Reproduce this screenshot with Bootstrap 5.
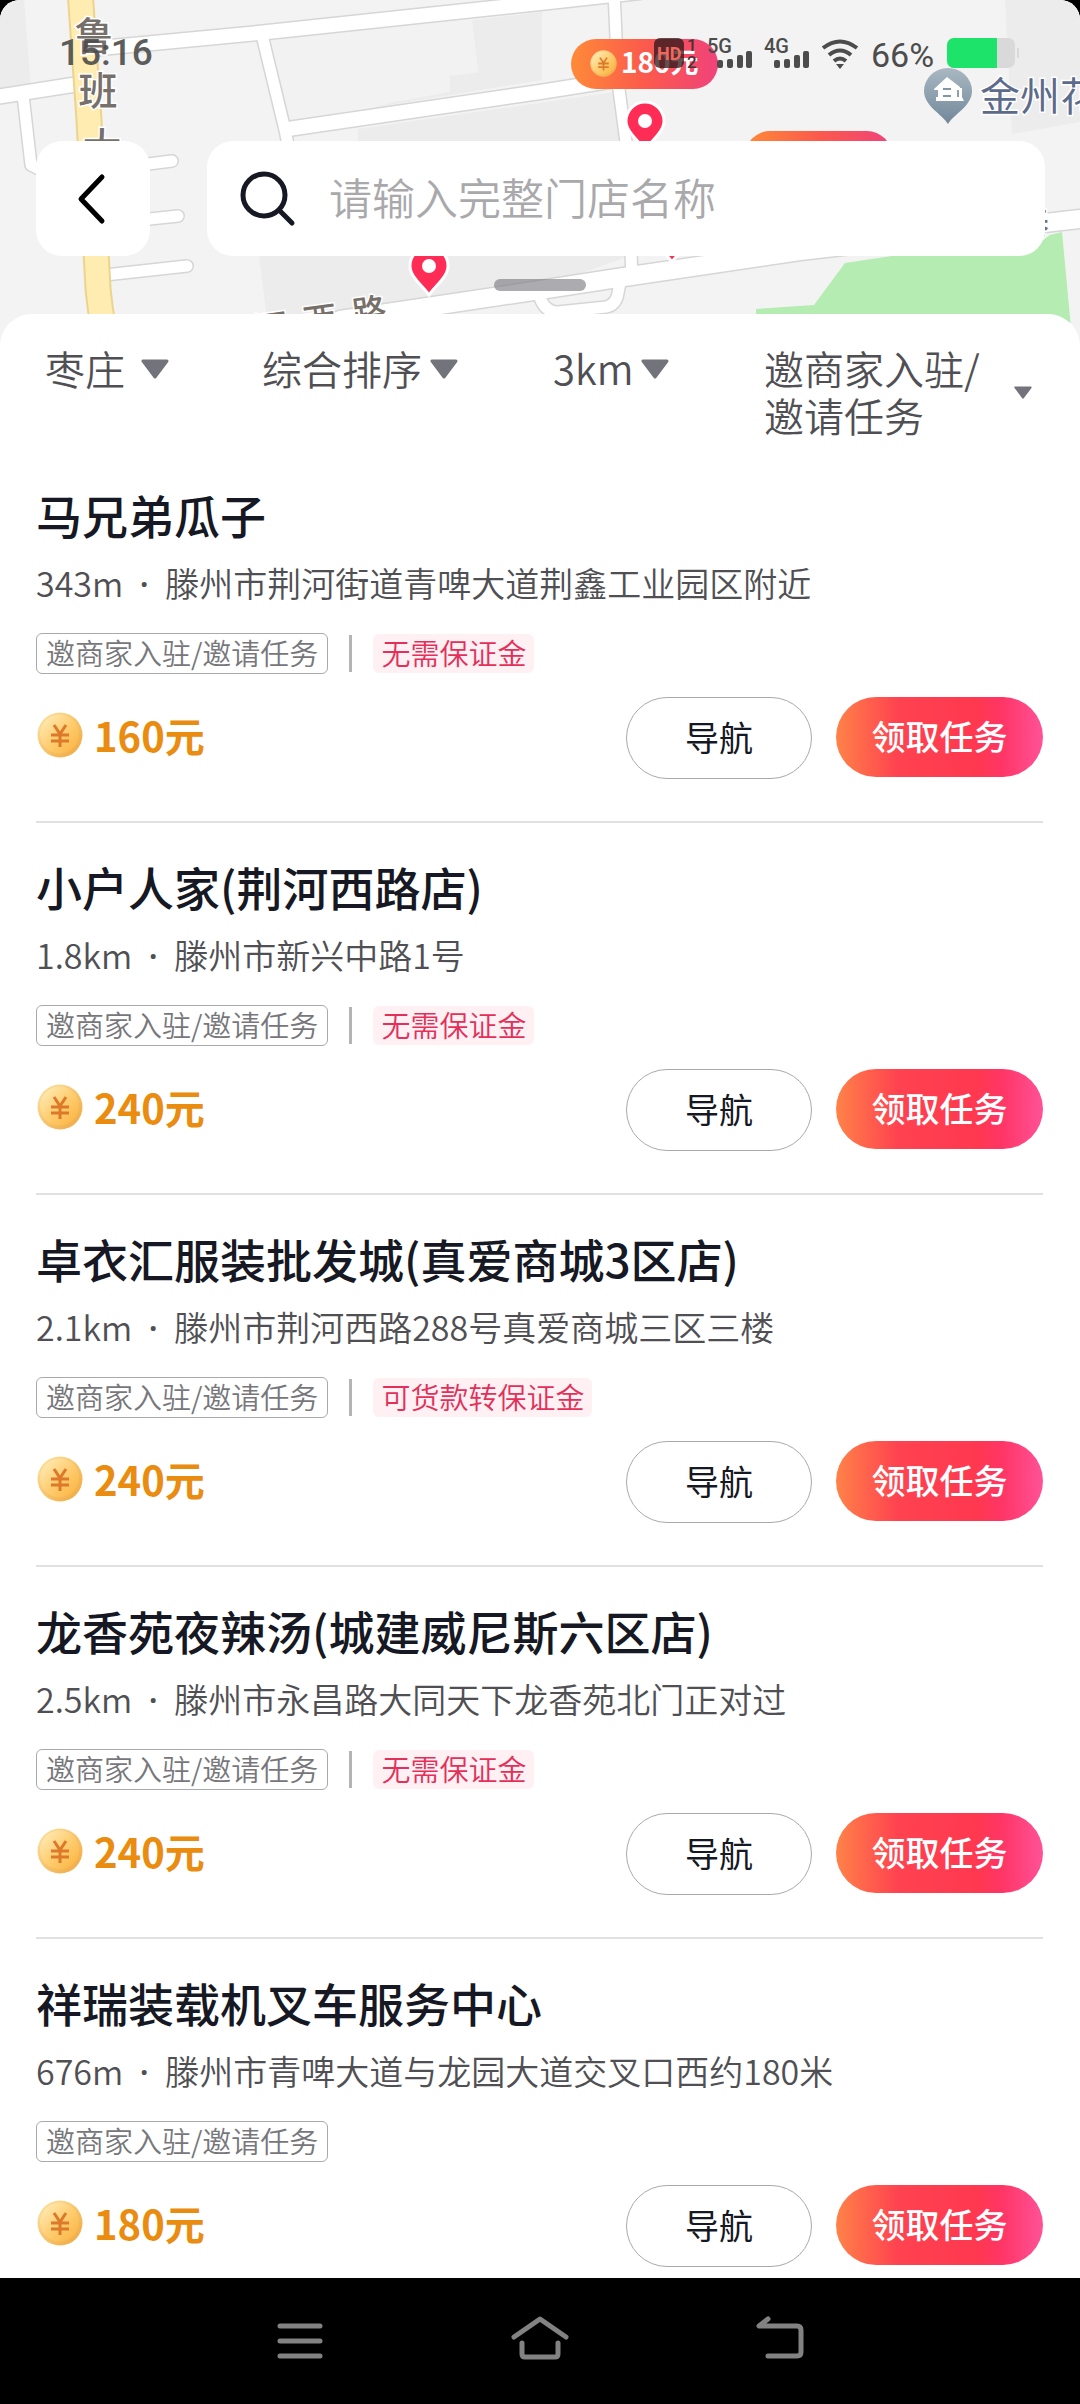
<!DOCTYPE html>
<html lang="zh-CN">
<head>
<meta charset="utf-8">
<meta name="viewport" content="width=device-width, initial-scale=1">
<title>附近任务</title>
<link rel="stylesheet" href="https://cdn.jsdelivr.net/npm/bootstrap@5.3.0/dist/css/bootstrap.min.css">
<style>
  body { background: #000; color: #161823; font-family: "Noto Sans CJK SC", sans-serif; }
  button { font-family: inherit; }
  .map-head { background: #f3f3f3; border-radius: 20px 20px 0 0; }
  .map-art { height: 360px; border-radius: 20px 20px 0 0; }
  .status-line { height: 106px; padding: 0 61px 0 59px; color: #4c4c4c; }
  .clock { font: 500 37px/40px Roboto, sans-serif; opacity: .9; }
  .tools { gap: 57px; padding: 35px 35px 0 36px; }
  .back-btn { width: 114px; height: 115px; border-radius: 26px; }
  .search-box { height: 115px; border-radius: 26px; padding: 0 33px; gap: 33px; }
  .search-box input { font-size: 43px; font-weight: 350; line-height: 60px; height: 64px; padding: 0 0 6px; color: #161823; outline: 0; }
  .search-box input::placeholder { color: #a9a9ac; opacity: 1; }
  .grip { width: 92px; height: 12px; border-radius: 6px; background: #808085; opacity: .65; margin: 23px auto; }
  .sheet { border-radius: 32px 32px 0 0; }
  .filters { display: grid; grid-template-columns: 217fr 291fr 211fr 316fr; height: 137px; padding: 31px 0 0 45px; }
  .filters button { font-size: 40px; line-height: 47px; font-weight: 350; color: #505054; }
  .task { padding: 33px 0 42px; margin: 0 37px 0 36px; border-bottom: 2px solid #e1e1e3; }
  .task:last-child { padding-bottom: 11px; border-bottom: 0; }
  .task h2 { font-size: 46px; line-height: 60px; font-weight: 500; margin: 0 0 14px; }
  .place { font-size: 34px; line-height: 50px; font-weight: 350; color: #505054; margin: 0 0 25px; }
  .place i { font-family: "Open Sans", sans-serif; font-style: normal; font-weight: 600; line-height: 1; display: inline-block; width: 42px; text-align: center; }
  .tags { height: 41px; margin-bottom: 23px; font-size: 29px; line-height: 37px; font-weight: 350; }
  .tag-kind { border: 1px solid #a9a9ac; border-radius: 6px; padding: 0 9px 2px; color: #77777b; }
  .tag-bar { width: 3px; height: 37px; background: #b4b4b6; margin: 0 21px; }
  .tag-fee { border-radius: 6px; padding: 0 8px 2px; background: #fff0f4; color: #e3305a; }
  .price { font-size: 40px; line-height: 60px; font-weight: 700; color: #ea8c10; gap: 10px; }
  .pill { font-size: 34px; line-height: 40px; font-weight: 500; border-radius: 41px; padding: 0 0 3px; }
  .pill-nav { width: 186px; height: 82px; border: 1px solid #a9a9ac; background: #fff; color: #161823; font-weight: 400; }
  .pill-take { width: 207px; height: 80px; border: 0; color: #fff; background: linear-gradient(90deg, #ff8248 0%, #ff4250 30%, #ff3850 68%, #ff3565 80%, #ff5298 100%); }
  .sys-nav { height: 126px; gap: 180px; }
  .sys-nav button { width: 60px; height: 60px; }
</style>
<script src="https://cdn.jsdelivr.net/npm/bootstrap@5.3.0/dist/js/bootstrap.bundle.min.js"></script>
</head>
<body class="min-vh-100 d-flex flex-column">

<svg width="0" height="0" class="position-absolute" aria-hidden="true">
  <defs>
    <linearGradient id="gold" x1="0" y1="0" x2="1" y2="1"><stop offset="0" stop-color="#fff0c0"/><stop offset=".5" stop-color="#ffce73"/><stop offset="1" stop-color="#f9b23c"/></linearGradient>
    <linearGradient id="rim" x1="0" y1="0" x2="1" y2="1"><stop offset="0" stop-color="#ffe3a0"/><stop offset="1" stop-color="#efa63c"/></linearGradient>
    <linearGradient id="hot" x1="0" x2="1"><stop offset="0" stop-color="#ff8a38"/><stop offset=".5" stop-color="#fb5a4c"/><stop offset="1" stop-color="#f0427a"/></linearGradient>
    <linearGradient id="slate" x1="0" y1="0" x2="0" y2="1"><stop offset="0" stop-color="#a9b8c2"/><stop offset="1" stop-color="#71889a"/></linearGradient>
  </defs>
  <symbol id="coin" viewBox="0 0 46 46">
    <circle cx="23" cy="23" r="22.500" fill="url(#rim)"/><circle cx="22.500" cy="22" r="19.500" fill="url(#gold)"/>
    <path d="M17 13l6 9 6-9M14 23h18M14 29h18M23 22v13" fill="none" stroke="#dc7a2a" stroke-width="3"/>
  </symbol>
  <symbol id="tri" viewBox="0 0 28 20"><path d="M2 2h24L14 18z" fill="#73737c" stroke="#73737c" stroke-width="3" stroke-linejoin="round"/></symbol>
  <symbol id="pin" viewBox="0 0 42 52">
    <path d="M21 49C15 40 2 31 2 20a19 19 0 0 1 38 0c0 11-13 20-19 29z" fill="#ff2c55" stroke="#fff" stroke-width="3"/><circle cx="21" cy="20" r="7" fill="#fff"/>
  </symbol>
</svg>

<header class="map-head position-relative">
  <svg class="map-art position-absolute top-0 start-0 w-100" viewBox="0 0 1080 360" preserveAspectRatio="xMidYMin slice" aria-label="地图">
    <rect width="1080" height="360" fill="#f3f3f3"/>
    <g fill="#ececec">
      <path d="M0 0h24l7 88-31 8zM1005 0h75v122l-68 12zM259 256h370l-88 32-274 32zM358 141v-12l257-37 8 50zM472 20l70-8v68l-170 28 78-22-2-10 30-4z"/>
    </g>
    <path d="M272 38l200-18 6 52-28 4v16l-78 14-84 16z" fill="#f2f2f2"/>
    <g fill="none" stroke-linecap="round" stroke-linejoin="round">
      <g stroke="#d6d6d6">
        <path stroke-width="17" d="M90 49L258 33 540 3 640-8M-10 98L85 83M288 129L540 92 622 79"/>
        <path stroke-width="14" d="M23 95l8 70 10 5M262 35l23 95 6 30M614-8l4 90 8 60 6 134M140 165l32-4M140 220l38-4M105 275l82-9M538 290q4 22 20 22l48-5q10-2 12-14l2-10"/>
        <path stroke-width="21" d="M340 320l200-30 84-13 176-26 280-32"/>
      </g>
      <g stroke="#fff">
        <path stroke-width="14" d="M90 49L258 33 540 3 640-8M-10 98L85 83M288 129L540 92 622 79"/>
        <path stroke-width="11" d="M23 95l8 70 10 5M262 35l23 95 6 30M614-8l4 90 8 60 6 134M140 165l32-4M140 220l38-4M105 275l82-9M538 290q4 22 20 22l48-5q10-2 12-14l2-10"/>
        <path stroke-width="18" d="M340 320l200-30 84-13 176-26 280-32"/>
      </g>
      <path stroke="#ecd48e" stroke-width="27" d="M80-10l9 130 8 150q1 40 12 80"/>
      <path stroke="#ffecb0" stroke-width="23" d="M80-10l9 130 8 150q1 40 12 80"/>
    </g>
    <path d="M756 309l58-4 31-42 60-9 135-12 10-7 12-3 12 128H756z" fill="#b4ecb1"/>
    <g font-family="Noto Sans CJK SC, sans-serif" font-size="39" font-weight="500" fill="#77706a" stroke="#fff" stroke-width="3" paint-order="stroke" text-anchor="middle">
      <text x="94" y="50">鲁</text><text x="98" y="105">班</text><text x="102" y="161">大</text>
      <g font-size="34"><text transform="translate(272 340) rotate(-8)">河</text><text transform="translate(322 332) rotate(-8)">西</text><text transform="translate(371 324) rotate(-8)">路</text><text x="1032" y="236">泰</text></g>
    </g>
    <use href="#pin" x="624" y="101" width="42" height="52"/>
    <use href="#pin" x="408" y="246" width="42" height="52"/>
    <use href="#pin" x="651" y="213" width="42" height="52"/>
    <rect x="745" y="131" width="147" height="50" rx="25" fill="url(#hot)"/>
    <rect x="571" y="39" width="147" height="50" rx="25" fill="url(#hot)"/>
    <use href="#coin" x="590" y="50" width="27" height="27"/>
    <text x="621" y="73" font-family="Noto Sans CJK SC, sans-serif" font-size="28" font-weight="700" fill="#fff">180元</text>
    <path d="M948 124c-6-10-24-18-24-33a24 23 0 0 1 48 0c0 15-18 23-24 33z" fill="url(#slate)"/>
    <path d="M934 89l13-12 13 10v3h-3v7h2v-9h3v9l2 4h-28v-4h2v-7h-4z" fill="#fff"/><path d="M943 89h8M943 96h8" stroke="#8296a4" stroke-width="2"/>
    <text x="980" y="111" font-family="Noto Sans CJK SC, sans-serif" font-size="40" fill="#5d6b8b" stroke="#fff" stroke-width="3" paint-order="stroke">金州花</text>
  </svg>

  <div class="status-line position-relative d-flex align-items-center justify-content-between">
    <span class="clock">15:16</span>
    <svg width="367" height="34" viewBox="652 36 367 34" fill="#4c4c4c" font-family="Roboto, sans-serif" font-weight="500" aria-label="信号和电量">
      <rect x="654" y="38" width="30" height="30" rx="6" fill="#2b1718" opacity=".75"/>
      <text x="657" y="60" font-size="18" font-weight="700" fill="#ee6a60">HD</text>
      <g font-size="17" fill="#4c3034"><text x="687" y="51">1</text><text x="687" y="68">2</text></g>
      <text x="707" y="53" font-size="20">5G</text><text x="764" y="53" font-size="20">4G</text>
      <g id="bars"><rect x="717" y="60" width="6" height="8" rx="2"/><rect x="727" y="59" width="6" height="9" rx="2"/><rect x="737" y="55" width="6" height="13" rx="2"/><rect x="746" y="51" width="6" height="17" rx="2"/></g>
      <use href="#bars" x="57"/>
      <g fill="none" stroke="#4c4c4c" stroke-width="4"><path d="M823 48q17-13 34 0M829 55q11-9 22 0M834 61q6-5 12 0"/></g><path d="M836 64h8l-4 5z"/>
      <text x="871" y="67" font-size="34" font-weight="400">66%</text>
      <rect x="947" y="38" width="68" height="30" rx="7" fill="#d9d9d9"/><path d="M954 38h43v30h-43a7 7 0 0 1-7-7V45a7 7 0 0 1 7-7z" fill="#1ee36a"/><rect x="1017" y="48" width="2" height="10" fill="#d9d9d9"/>
    </svg>
  </div>

  <div class="tools position-relative d-flex">
    <button type="button" class="back-btn bg-white border-0 p-0 flex-shrink-0" aria-label="返回">
      <svg width="40" height="56" viewBox="0 0 40 56"><path d="M29 6L8 28l21 22" fill="none" stroke="#000" stroke-width="5" stroke-linecap="round" stroke-linejoin="round"/></svg>
    </button>
    <label class="search-box bg-white d-flex align-items-center flex-fill">
      <svg width="56" height="58" viewBox="0 0 56 58" fill="none" stroke="#161823" stroke-linecap="round"><circle cx="24" cy="25" r="21" stroke-width="5"/><path d="M39 40l13 13" stroke-width="5"/></svg>
      <input type="search" class="border-0 bg-transparent flex-fill" placeholder="请输入完整门店名称" aria-label="门店名称">
    </label>
  </div>
  <div class="position-relative overflow-hidden"><div class="grip"></div></div>
</header>

<main class="sheet bg-white position-relative flex-fill">
  <div class="filters align-items-start">
    <button type="button" class="bg-transparent border-0 p-0 d-flex align-items-center text-start">枣庄<svg class="ms-3" width="28" height="20"><use href="#tri"/></svg></button>
    <button type="button" class="bg-transparent border-0 p-0 d-flex align-items-center text-start">综合排序<svg class="ms-2" width="28" height="20"><use href="#tri"/></svg></button>
    <button type="button" class="bg-transparent border-0 p-0 d-flex align-items-center text-start">3km<svg class="ms-2" width="28" height="20"><use href="#tri"/></svg></button>
    <button type="button" class="bg-transparent border-0 p-0 pe-5 d-flex align-items-center justify-content-between text-start"><span>邀商家入驻/<br>邀请任务</span><svg width="18" height="13"><use href="#tri"/></svg></button>
  </div>

  <section>
    <article class="task">
      <h2>马兄弟瓜子</h2>
      <p class="place">343m<i>·</i>滕州市荆河街道青啤大道荆鑫工业园区附近</p>
      <div class="tags d-flex align-items-center"><span class="tag-kind">邀商家入驻/邀请任务</span><span class="tag-bar"></span><span class="tag-fee">无需保证金</span></div>
      <div class="d-flex align-items-start">
        <div class="price d-flex align-items-center me-auto my-2"><svg width="48" height="46"><use href="#coin"/></svg>160元</div>
        <button type="button" class="pill pill-nav me-4">导航</button><button type="button" class="pill pill-take">领取任务</button>
      </div>
    </article>
    <article class="task">
      <h2>小户人家(荆河西路店)</h2>
      <p class="place">1.8km<i>·</i>滕州市新兴中路1号</p>
      <div class="tags d-flex align-items-center"><span class="tag-kind">邀商家入驻/邀请任务</span><span class="tag-bar"></span><span class="tag-fee">无需保证金</span></div>
      <div class="d-flex align-items-start">
        <div class="price d-flex align-items-center me-auto my-2"><svg width="48" height="46"><use href="#coin"/></svg>240元</div>
        <button type="button" class="pill pill-nav me-4">导航</button><button type="button" class="pill pill-take">领取任务</button>
      </div>
    </article>
    <article class="task">
      <h2>卓衣汇服装批发城(真爱商城3区店)</h2>
      <p class="place">2.1km<i>·</i>滕州市荆河西路288号真爱商城三区三楼</p>
      <div class="tags d-flex align-items-center"><span class="tag-kind">邀商家入驻/邀请任务</span><span class="tag-bar"></span><span class="tag-fee">可货款转保证金</span></div>
      <div class="d-flex align-items-start">
        <div class="price d-flex align-items-center me-auto my-2"><svg width="48" height="46"><use href="#coin"/></svg>240元</div>
        <button type="button" class="pill pill-nav me-4">导航</button><button type="button" class="pill pill-take">领取任务</button>
      </div>
    </article>
    <article class="task">
      <h2>龙香苑夜辣汤(城建威尼斯六区店)</h2>
      <p class="place">2.5km<i>·</i>滕州市永昌路大同天下龙香苑北门正对过</p>
      <div class="tags d-flex align-items-center"><span class="tag-kind">邀商家入驻/邀请任务</span><span class="tag-bar"></span><span class="tag-fee">无需保证金</span></div>
      <div class="d-flex align-items-start">
        <div class="price d-flex align-items-center me-auto my-2"><svg width="48" height="46"><use href="#coin"/></svg>240元</div>
        <button type="button" class="pill pill-nav me-4">导航</button><button type="button" class="pill pill-take">领取任务</button>
      </div>
    </article>
    <article class="task">
      <h2>祥瑞装载机叉车服务中心</h2>
      <p class="place">676m<i>·</i>滕州市青啤大道与龙园大道交叉口西约180米</p>
      <div class="tags d-flex align-items-center"><span class="tag-kind">邀商家入驻/邀请任务</span></div>
      <div class="d-flex align-items-start">
        <div class="price d-flex align-items-center me-auto my-2"><svg width="48" height="46"><use href="#coin"/></svg>180元</div>
        <button type="button" class="pill pill-nav me-4">导航</button><button type="button" class="pill pill-take">领取任务</button>
      </div>
    </article>
  </section>
</main>

<nav class="sys-nav bg-black d-flex align-items-center justify-content-center" aria-label="系统导航">
  <button type="button" class="bg-transparent border-0 p-0" aria-label="最近任务"><svg width="60" height="60" viewBox="0 0 60 60" fill="none" stroke="#828282" stroke-width="5" stroke-linecap="round"><path d="M10 15h40M10 30h40M10 45h40"/></svg></button>
  <button type="button" class="bg-transparent border-0 p-0" aria-label="主屏幕"><svg width="60" height="60" viewBox="0 0 60 60" fill="none" stroke="#828282" stroke-width="5" stroke-linecap="round" stroke-linejoin="round"><path d="M4 26L30 8l26 18M12 32v11q0 3 3 3h30q3 0 3-3V32"/></svg></button>
  <button type="button" class="bg-transparent border-0 p-0" aria-label="返回"><svg width="60" height="60" viewBox="0 0 60 60" fill="none" stroke="#828282" stroke-width="5" stroke-linecap="round" stroke-linejoin="round"><path d="M18 8L9 15h38q4 0 4 4v22q0 4-4 4H18"/></svg></button>
</nav>
</body>
</html>
